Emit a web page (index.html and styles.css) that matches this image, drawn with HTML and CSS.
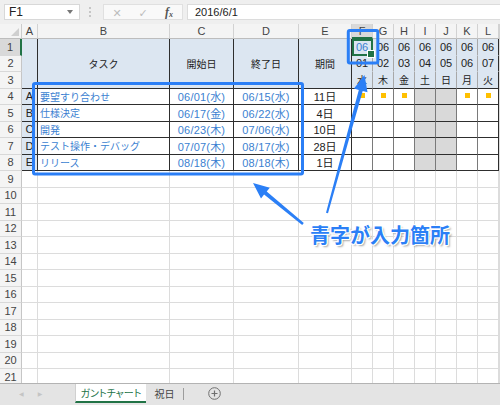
FILE: index.html
```html
<!DOCTYPE html>
<html lang="ja">
<head>
<meta charset="utf-8">
<title>ガントチャート</title>
<link rel="stylesheet" href="styles.css">
</head>
<body>
<div class="app">
  <div class="fbar">
    <div class="namebox"><span>F1</span><span class="dd"></span></div>
    <div class="sep"><i></i><i></i><i></i></div>
    <div class="fbtns"><span class="fb-x">✕</span><span class="fb-ok">✓</span><span class="fb-fx">f<sub>x</sub></span></div>
    <div class="finput">2016/6/1</div>
  </div>

  <div class="sheet">
    <!-- column headers -->
    <div class="corner"></div>
    <div class="ch">A</div><div class="ch">B</div><div class="ch">C</div><div class="ch">D</div><div class="ch">E</div>
    <div class="ch sel">F</div><div class="ch">G</div><div class="ch">H</div><div class="ch">I</div><div class="ch">J</div><div class="ch">K</div><div class="ch">L</div><div class="ch"></div>

    <!-- row 1 -->
    <div class="rh sel">1</div>
    <div class="hd span3"></div>
    <div class="hd span3">タスク</div>
    <div class="hd span3">開始日</div>
    <div class="hd span3">終了日</div>
    <div class="hd span3">期間</div>
    <div class="dh active in">06</div><div class="dh">06</div><div class="dh">06</div><div class="dh">06</div><div class="dh">06</div><div class="dh">06</div><div class="dh last">06</div>
    <div class="c"></div>

    <!-- row 2 -->
    <div class="rh">2</div>
    <div class="dh">01</div><div class="dh">02</div><div class="dh">03</div><div class="dh">04</div><div class="dh">05</div><div class="dh">06</div><div class="dh last">07</div>
    <div class="c"></div>

    <!-- row 3 -->
    <div class="rh">3</div>
    <div class="dh dow">水</div><div class="dh dow">木</div><div class="dh dow">金</div><div class="dh dow">土</div><div class="dh dow">日</div><div class="dh dow">月</div><div class="dh dow last">火</div>
    <div class="c"></div>

    <!-- row 4 -->
    <div class="rh">4</div>
    <div class="tc key">A</div>
    <div class="tc task">要望すり合わせ</div>
    <div class="tc date">06/01(水)</div>
    <div class="tc date">06/15(水)</div>
    <div class="tc dur">11日</div>
    <div class="gc"><b></b></div><div class="gc"><b></b></div><div class="gc"><b></b></div><div class="gc we"></div><div class="gc we"></div><div class="gc"><b></b></div><div class="gc last"><b></b></div>
    <div class="c"></div>

    <!-- row 5 -->
    <div class="rh">5</div>
    <div class="tc key">B</div>
    <div class="tc task">仕様決定</div>
    <div class="tc date">06/17(金)</div>
    <div class="tc date">06/22(水)</div>
    <div class="tc dur">4日</div>
    <div class="gc"></div><div class="gc"></div><div class="gc"></div><div class="gc we"></div><div class="gc we"></div><div class="gc"></div><div class="gc last"></div>
    <div class="c"></div>

    <!-- row 6 -->
    <div class="rh">6</div>
    <div class="tc key">C</div>
    <div class="tc task">開発</div>
    <div class="tc date">06/23(木)</div>
    <div class="tc date">07/06(水)</div>
    <div class="tc dur">10日</div>
    <div class="gc"></div><div class="gc"></div><div class="gc"></div><div class="gc we"></div><div class="gc we"></div><div class="gc"></div><div class="gc last"></div>
    <div class="c"></div>

    <!-- row 7 -->
    <div class="rh">7</div>
    <div class="tc key">D</div>
    <div class="tc task">テスト操作・デバッグ</div>
    <div class="tc date">07/07(木)</div>
    <div class="tc date">08/17(水)</div>
    <div class="tc dur">28日</div>
    <div class="gc"></div><div class="gc"></div><div class="gc"></div><div class="gc we"></div><div class="gc we"></div><div class="gc"></div><div class="gc last"></div>
    <div class="c"></div>

    <!-- row 8 -->
    <div class="rh">8</div>
    <div class="tc key">E</div>
    <div class="tc task">リリース</div>
    <div class="tc date">08/18(木)</div>
    <div class="tc date">08/18(木)</div>
    <div class="tc dur">1日</div>
    <div class="gc"></div><div class="gc"></div><div class="gc"></div><div class="gc we"></div><div class="gc we"></div><div class="gc"></div><div class="gc last"></div>
    <div class="c"></div>

    <!-- empty rows 9-21 -->
    <div class="rh">9</div><div class="c"></div><div class="c"></div><div class="c"></div><div class="c"></div><div class="c"></div><div class="c"></div><div class="c"></div><div class="c"></div><div class="c"></div><div class="c"></div><div class="c"></div><div class="c"></div><div class="c"></div>
    <div class="rh">10</div><div class="c"></div><div class="c"></div><div class="c"></div><div class="c"></div><div class="c"></div><div class="c"></div><div class="c"></div><div class="c"></div><div class="c"></div><div class="c"></div><div class="c"></div><div class="c"></div><div class="c"></div>
    <div class="rh">11</div><div class="c"></div><div class="c"></div><div class="c"></div><div class="c"></div><div class="c"></div><div class="c"></div><div class="c"></div><div class="c"></div><div class="c"></div><div class="c"></div><div class="c"></div><div class="c"></div><div class="c"></div>
    <div class="rh">12</div><div class="c"></div><div class="c"></div><div class="c"></div><div class="c"></div><div class="c"></div><div class="c"></div><div class="c"></div><div class="c"></div><div class="c"></div><div class="c"></div><div class="c"></div><div class="c"></div><div class="c"></div>
    <div class="rh">13</div><div class="c"></div><div class="c"></div><div class="c"></div><div class="c"></div><div class="c"></div><div class="c"></div><div class="c"></div><div class="c"></div><div class="c"></div><div class="c"></div><div class="c"></div><div class="c"></div><div class="c"></div>
    <div class="rh">14</div><div class="c"></div><div class="c"></div><div class="c"></div><div class="c"></div><div class="c"></div><div class="c"></div><div class="c"></div><div class="c"></div><div class="c"></div><div class="c"></div><div class="c"></div><div class="c"></div><div class="c"></div>
    <div class="rh">15</div><div class="c"></div><div class="c"></div><div class="c"></div><div class="c"></div><div class="c"></div><div class="c"></div><div class="c"></div><div class="c"></div><div class="c"></div><div class="c"></div><div class="c"></div><div class="c"></div><div class="c"></div>
    <div class="rh">16</div><div class="c"></div><div class="c"></div><div class="c"></div><div class="c"></div><div class="c"></div><div class="c"></div><div class="c"></div><div class="c"></div><div class="c"></div><div class="c"></div><div class="c"></div><div class="c"></div><div class="c"></div>
    <div class="rh">17</div><div class="c"></div><div class="c"></div><div class="c"></div><div class="c"></div><div class="c"></div><div class="c"></div><div class="c"></div><div class="c"></div><div class="c"></div><div class="c"></div><div class="c"></div><div class="c"></div><div class="c"></div>
    <div class="rh">18</div><div class="c"></div><div class="c"></div><div class="c"></div><div class="c"></div><div class="c"></div><div class="c"></div><div class="c"></div><div class="c"></div><div class="c"></div><div class="c"></div><div class="c"></div><div class="c"></div><div class="c"></div>
    <div class="rh">19</div><div class="c"></div><div class="c"></div><div class="c"></div><div class="c"></div><div class="c"></div><div class="c"></div><div class="c"></div><div class="c"></div><div class="c"></div><div class="c"></div><div class="c"></div><div class="c"></div><div class="c"></div>
    <div class="rh">20</div><div class="c"></div><div class="c"></div><div class="c"></div><div class="c"></div><div class="c"></div><div class="c"></div><div class="c"></div><div class="c"></div><div class="c"></div><div class="c"></div><div class="c"></div><div class="c"></div><div class="c"></div>
    <div class="rh">21</div><div class="c"></div><div class="c"></div><div class="c"></div><div class="c"></div><div class="c"></div><div class="c"></div><div class="c"></div><div class="c"></div><div class="c"></div><div class="c"></div><div class="c"></div><div class="c"></div><div class="c"></div>
  </div>

  <div class="tabs">
    <div class="tabnav"><span>◀</span><span>▶</span></div>
    <div class="tab on">ガントチャート</div>
    <div class="tab off">祝日</div>
    <div class="tabsep"></div>
    <svg class="addbtn" width="13" height="13" viewBox="0 0 13 13"><circle cx="6.5" cy="6.5" r="5.8" fill="none" stroke="#6f6f6f" stroke-width="1"/><path d="M6.5 3.5v6M3.5 6.5h6" stroke="#6f6f6f" stroke-width="1.2"/></svg>
  </div>

  <svg class="overlay" width="500" height="405" viewBox="0 0 500 405">
    <rect x="33.5" y="83.5" width="269" height="90.5" rx="1.5" fill="none" stroke="#2b7ff6" stroke-width="3"/>
    <rect x="348.3" y="30.5" width="29.5" height="32.5" rx="1.5" fill="none" stroke="#2b7ff6" stroke-width="3"/>
    <polygon points="253,183 269.8,187.7 266.7,191.6 303.8,223 302.2,225 264.1,194.6 261,198.5" fill="#2b7ff6"/>
    <polygon points="364.5,75 367.5,92.3 362.7,91 328,213.2 326,212.7 358.8,89.9 354,88.6" fill="#2b7ff6"/>
  </svg>
  <div class="callout">青字が入力箇所</div>
</div>
</body>
</html>
```

FILE: styles.css
```css
* {
  box-sizing: border-box;
  margin: 0;
  padding: 0;
}

html,
body {
  width: 500px;
  height: 405px;
  overflow: hidden;
  background: #fff;
}

body {
  font-family: "Liberation Sans", "Noto Sans CJK JP", sans-serif;
  color: #222;
}

.app {
  position: relative;
  width: 500px;
  height: 405px;
  display: flex;
  flex-direction: column;
}

/* ---------- formula bar ---------- */
.fbar {
  height: 24px;
  flex: none;
  background: #efefef;
  display: flex;
  align-items: flex-start;
  padding: 4px 0 0 4px;
}

.namebox {
  width: 76px;
  height: 16px;
  background: #fff;
  border: 1px solid #d8d8d8;
  display: flex;
  align-items: center;
  justify-content: space-between;
  padding: 0 6px 0 4px;
  font-size: 12px;
  color: #222;
}

.dd {
  width: 0;
  height: 0;
  border-left: 3.5px solid transparent;
  border-right: 3.5px solid transparent;
  border-top: 4px solid #777;
}

.sep {
  margin-left: 9px;
  height: 16px;
  display: flex;
  flex-direction: column;
  justify-content: center;
  gap: 2px;
}

.sep i {
  display: block;
  width: 2px;
  height: 2px;
  background: #c6c6c6;
}

.fbtns {
  margin-left: 12px;
  width: 80px;
  height: 16px;
  background: #f9f9f9;
  border: 1px solid #e0e0e0;
  display: grid;
  grid-template-columns: repeat(3, 1fr);
  align-items: center;
  justify-items: center;
  font-size: 11px;
  line-height: 14px;
}

.fb-x,
.fb-ok {
  color: #bdbdbd;
  font-family: "DejaVu Sans", sans-serif;
  font-size: 11px;
}

.fb-fx {
  font-family: "Liberation Serif", serif;
  font-style: italic;
  font-weight: 700;
  color: #555;
  font-size: 12px;
}

.fb-fx sub {
  font-size: 8px;
  vertical-align: -1px;
}

.finput {
  margin-left: 4px;
  flex: 1;
  height: 16px;
  background: #fff;
  border: 1px solid #dcdcdc;
  border-right: none;
  padding-left: 7px;
  font-size: 11px;
  line-height: 14px;
  color: #222;
}

/* ---------- sheet grid ---------- */
.sheet {
  flex: 1;
  overflow: hidden;
  display: grid;
  grid-template-columns: 22px 16px 132px 64px 65px 53px repeat(7, 21px) 1fr;
  grid-template-rows: 15px;
  grid-auto-rows: 16.5px;
  align-content: start;
}

.sheet > div {
  border-right: 1px solid #dcdcdc;
  border-bottom: 1px solid #dcdcdc;
  display: flex;
  align-items: center;
  justify-content: center;
  white-space: nowrap;
  overflow: hidden;
}

.corner {
  position: relative;
  background: #f4f4f4;
  border-right-color: #cccccc !important;
  border-bottom-color: #bdbdbd !important;
}

.corner::after {
  content: "";
  position: absolute;
  right: 2px;
  bottom: 2px;
  width: 0;
  height: 0;
  border-left: 8px solid transparent;
  border-bottom: 8px solid #cfcfcf;
}

.ch {
  background: #f4f4f4;
  border-right-color: #d2d2d2 !important;
  border-bottom-color: #bdbdbd !important;
  font-size: 11px;
  color: #444;
}

.ch.sel {
  background: #d9d9d9;
  border-bottom: 2px solid #217346 !important;
}

.rh {
  background: #f4f4f4;
  border-right-color: #c6c6c6 !important;
  border-bottom-color: #d8d8d8 !important;
  font-size: 11px;
  color: #444;
}

.rh.sel {
  background: #d9d9d9;
  border-right: 2px solid #217346 !important;
}

/* header block */
.span3 {
  grid-row: span 3;
}

.hd {
  background: #dce6f1;
  border-right-color: #2e2e2e !important;
  border-bottom-color: #2e2e2e !important;
  font-size: 10px;
  color: #222;
}

.dh {
  background: #dce6f1;
  border-right-color: #a8a8a8 !important;
  border-bottom-color: transparent !important;
  font-size: 11px;
  color: #222;
}

.dh.dow {
  font-size: 10px;
  border-bottom-color: #2e2e2e !important;
}

.dh.last,
.gc.last {
  border-right-color: #2e2e2e !important;
}

.dh.in {
  color: #3b7fd1;
}

.active {
  position: relative;
  overflow: visible !important;
  outline: 2px solid #217346;
  outline-offset: -2px;
}

.active::after {
  content: "";
  position: absolute;
  right: -3px;
  bottom: -3px;
  width: 6px;
  height: 6px;
  background: #217346;
  border: 1px solid #fff;
}

/* table body */
.tc {
  border-right-color: #2e2e2e !important;
  border-bottom-color: #2e2e2e !important;
  font-size: 11px;
}

.tc.key {
  background: #dce6f1;
  color: #222;
}

.tc.task {
  justify-content: flex-start;
  padding-left: 2px;
  font-size: 10px;
  color: #3b7fd1;
}

.tc.date {
  color: #3b7fd1;
  letter-spacing: 0.2px;
}

.tc.dur {
  color: #222;
}

.gc {
  border-right-color: #7a7a7a !important;
  border-bottom-color: #2e2e2e !important;
}

.gc.we {
  background: #d9d9d9;
}

.gc b {
  display: block;
  width: 5px;
  height: 5px;
  margin-top: -1px;
  background: #ffc000;
}

/* ---------- sheet tabs ---------- */
.tabs {
  height: 22px;
  flex: none;
  background: #e4e4e4;
  border-top: 1px solid #b3b3b3;
  display: flex;
  align-items: stretch;
  padding-bottom: 2px;
}

.tabnav {
  width: 75px;
  display: flex;
  align-items: center;
  padding-left: 19px;
  gap: 14px;
  font-family: "DejaVu Sans", sans-serif;
  font-size: 6px;
  color: #c4c4c4;
}

.tab {
  display: flex;
  align-items: center;
  justify-content: center;
  font-family: "Noto Sans CJK JP", sans-serif;
  font-size: 10px;
  font-feature-settings: "palt";
}

.tab.on {
  width: 71px;
  background: #fff;
  color: #217346;
  border-left: 1px solid #d0d0d0;
  border-bottom: 2px solid #217346;
}

.tab.off {
  width: 37px;
  color: #444;
}

.tabsep {
  width: 1px;
  margin: 4px 0 3px;
  background: #9c9c9c;
}

.addbtn {
  align-self: center;
  margin-left: 24px;
}

/* ---------- annotation overlay ---------- */
.overlay {
  position: absolute;
  left: 0;
  top: 0;
  pointer-events: none;
}

.callout {
  position: absolute;
  left: 310px;
  top: 225px;
  font-family: "Noto Sans CJK JP", sans-serif;
  font-size: 20px;
  line-height: 20px;
  font-weight: 700;
  color: #2b7ff6;
  white-space: nowrap;
  text-shadow:
    -1px -1px 0 #fff, 1px -1px 0 #fff, -1px 1px 0 #fff, 1px 1px 0 #fff,
    0 -1px 0 #fff, 0 1px 0 #fff, -1px 0 0 #fff, 1px 0 0 #fff,
    2px 2px 2px rgba(0, 0, 0, 0.35);
}
```
